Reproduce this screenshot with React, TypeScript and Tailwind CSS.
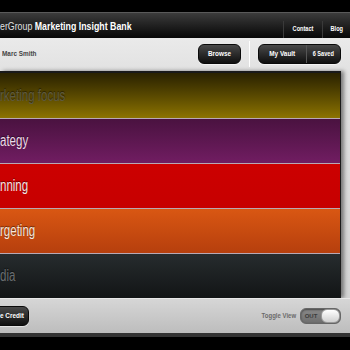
import React from 'react';

const font = { fontFamily: '"Liberation Sans", Arial, sans-serif' };

type Row = { label: string; bg: string; text: string };

const rows: Row[] = [
  { label: 'rketing focus', bg: 'bg-gradient-to-b from-[#2a2200] to-[#8c7300]', text: 'text-[#5e5a40]' },
  { label: 'ategy', bg: 'bg-gradient-to-b from-[#4a1240] to-[#711d62]', text: 'text-[#ecdce8]' },
  { label: 'nning', bg: 'bg-gradient-to-b from-[#cc0000] to-[#c70000]', text: 'text-[#f6e2e2]' },
  { label: 'rgeting', bg: 'bg-gradient-to-b from-[#d95713] to-[#b63f0d]', text: 'text-[#f6e6dc]' },
  { label: 'dia', bg: 'bg-gradient-to-b from-[#272c2e] to-[#121516]', text: 'text-[#6a6e70]' },
];

// condensed look: the original uses a narrow Helvetica
const Narrow: React.FC<{ children: React.ReactNode; className?: string }> = ({ children, className }) => (
  <span className={`inline-block whitespace-nowrap scale-x-[0.8] ${className ?? 'origin-center'}`}>{children}</span>
);

const DarkButton: React.FC<{ children: React.ReactNode; className?: string }> = ({ children, className }) => (
  <div
    className={`flex items-center h-[20px] rounded-[6px] bg-gradient-to-b from-[#4a4a4a] to-[#101010] border border-[#0a0a0a] shadow-[0_1px_1px_rgba(255,255,255,0.6)] text-white text-[8px] font-bold ${className ?? ''}`}
  >
    {children}
  </div>
);

const App: React.FC = () => {
  return (
    <div className="w-[350px] h-[350px] overflow-hidden bg-black flex flex-col" style={font}>
      {/* top black strip */}
      <div className="h-[12px] shrink-0 bg-black" />

      {/* header */}
      <div className="h-[26px] shrink-0 flex border-t border-[#5a5a5a] bg-gradient-to-b from-[#3c3c3c] to-[#080808]">
        <div className="flex-1 flex items-center text-[11px] text-white leading-none pt-[1px]">
          <span className="inline-block whitespace-nowrap origin-left scale-x-[0.8]">
            <span className="font-light text-[#e0e0e0]">erGroup</span> <span className="font-bold">Marketing Insight Bank</span>
          </span>
        </div>
        <div className="flex text-[7px] font-bold text-white">
          <div className="w-[39px] mt-[8px] flex items-center justify-center border-l border-[#3a3a3a]">
            <Narrow>Contact</Narrow>
          </div>
          <div className="w-[28px] mt-[8px] flex items-center justify-center border-l border-[#3a3a3a]">
            <Narrow>Blog</Narrow>
          </div>
        </div>
      </div>

      {/* user bar */}
      <div className="h-[32px] shrink-0 flex items-center bg-gradient-to-b from-[#eaeaea] to-[#e2e2e2]">
        <div className="flex-1 pl-[2px] text-[8px] font-bold text-[#444]">
          <Narrow className="origin-left">Marc Smith</Narrow>
        </div>
        <DarkButton className="w-[43px] justify-center">
          <Narrow>Browse</Narrow>
        </DarkButton>
        <div className="w-[1px] h-[26px] bg-[#c4c4c4] border-r border-white mx-[8px]" />
        <DarkButton className="w-[83px] mr-[9px]">
          <span className="w-[47px] text-center">
            <Narrow>My Vault</Narrow>
          </span>
          <span className="w-[1px] h-full bg-[#555]" />
          <span className="flex-1 text-center text-[7px]">
            <Narrow>6 Saved</Narrow>
          </span>
        </DarkButton>
      </div>

      {/* main panel area */}
      <div className="flex-1 flex bg-gradient-to-b from-[#e2e2e2] to-[#d4d4d4] pt-[1px]">
        <div className="w-[341px] flex flex-col border-t-2 border-r border-[#1a1a1a] shadow-[3px_0_4px_rgba(0,0,0,0.45)]">
          {rows.map((r, i) => (
            <div
              key={r.label}
              className={`h-[45px] flex items-center ${r.bg} ${i > 0 ? 'border-t border-[#b8a8b4]' : ''}`}
            >
              <span
                className={`inline-block whitespace-nowrap origin-left scale-x-[0.72] text-[16px] leading-none ${r.text} [text-shadow:0_-1px_1px_rgba(0,0,0,0.5)]`}
              >
                {r.label}
              </span>
            </div>
          ))}
        </div>
      </div>

      {/* bottom bar */}
      <div className="h-[35px] shrink-0 flex items-center bg-gradient-to-b from-[#d6d6d6] to-[#bdbdbd] border-t border-[#e8e8e8]">
        <DarkButton className="w-[34px] -ml-[5px] justify-center rounded-l-none">
          <Narrow>e Credit</Narrow>
        </DarkButton>
        <div className="flex-1" />
        <span className="text-[7.5px] font-bold text-[#6a6a6a] mr-[4px]">
          <Narrow className="origin-right">Toggle View</Narrow>
        </span>
        <div className="w-[41px] h-[16px] mr-[9px] rounded-[6px] bg-gradient-to-b from-[#8a8a8a] to-[#6e6e6e] border border-[#666] shadow-[inset_0_1px_2px_rgba(0,0,0,0.5)] flex items-center">
          <span className="w-[20px] text-center text-[6px] font-bold text-[#3c3c3c]">OUT</span>
          <div className="flex-1 h-full rounded-[6px] bg-gradient-to-b from-[#ffffff] to-[#d0d0d0] border border-[#999]" />
        </div>
      </div>

      {/* bottom dark strip */}
      <div className="h-[4px] shrink-0 bg-[#333]" />
      <div className="flex-1 bg-black" />
    </div>
  );
};

export default App;
